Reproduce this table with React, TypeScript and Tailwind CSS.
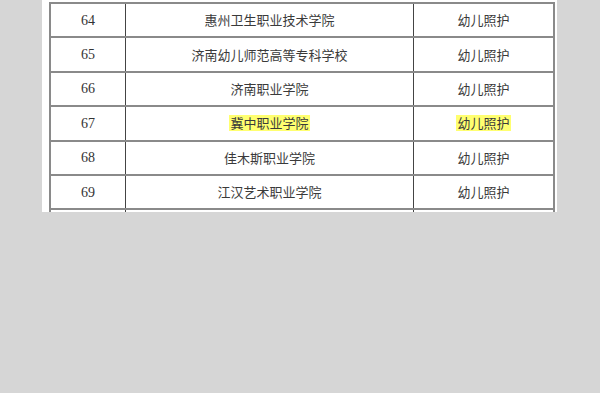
const rows = [
  { no: "64", school: "惠州卫生职业技术学院", major: "幼儿照护" },
  { no: "65", school: "济南幼儿师范高等专科学校", major: "幼儿照护" },
  { no: "66", school: "济南职业学院", major: "幼儿照护" },
  { no: "67", school: "冀中职业学院", major: "幼儿照护", mark: true },
  { no: "68", school: "佳木斯职业学院", major: "幼儿照护" },
  { no: "69", school: "江汉艺术职业学院", major: "幼儿照护" },
  { no: "", school: "", major: "" },
];

const cjk = "font-['Noto_Sans_CJK_SC','Noto_Sans',sans-serif] text-[13px] text-[#3a3a3a]";

export default function App() {
  return (
    <div className="w-[600px] h-[393px] bg-[#d6d6d6] overflow-hidden">
      <div className="ml-[42px] w-[515px] h-[212px] bg-white overflow-hidden pt-[2px] pl-[7px]">
        <div className="w-[506px] border-l-2 border-r-2 border-[#8a8a8a]">
          {rows.map((r, i) => (
            <div key={i} className="flex h-[34.4px] border-t-2 border-[#8a8a8a]">
              <div className="w-[75px] flex items-center justify-center border-r border-[#444] font-['Liberation_Serif',serif] text-[14px] text-[#333]">
                {r.no}
              </div>
              <div className={`w-[288px] flex items-center justify-center border-r border-[#444] ${cjk}`}>
                <span className={r.mark ? "bg-[#ffff70] leading-4 px-px" : "leading-4"}>{r.school}</span>
              </div>
              <div className={`flex-1 flex items-center justify-center ${cjk}`}>
                <span className={r.mark ? "bg-[#ffff70] leading-4 px-px" : "leading-4"}>{r.major}</span>
              </div>
            </div>
          ))}
        </div>
      </div>
    </div>
  );
}
